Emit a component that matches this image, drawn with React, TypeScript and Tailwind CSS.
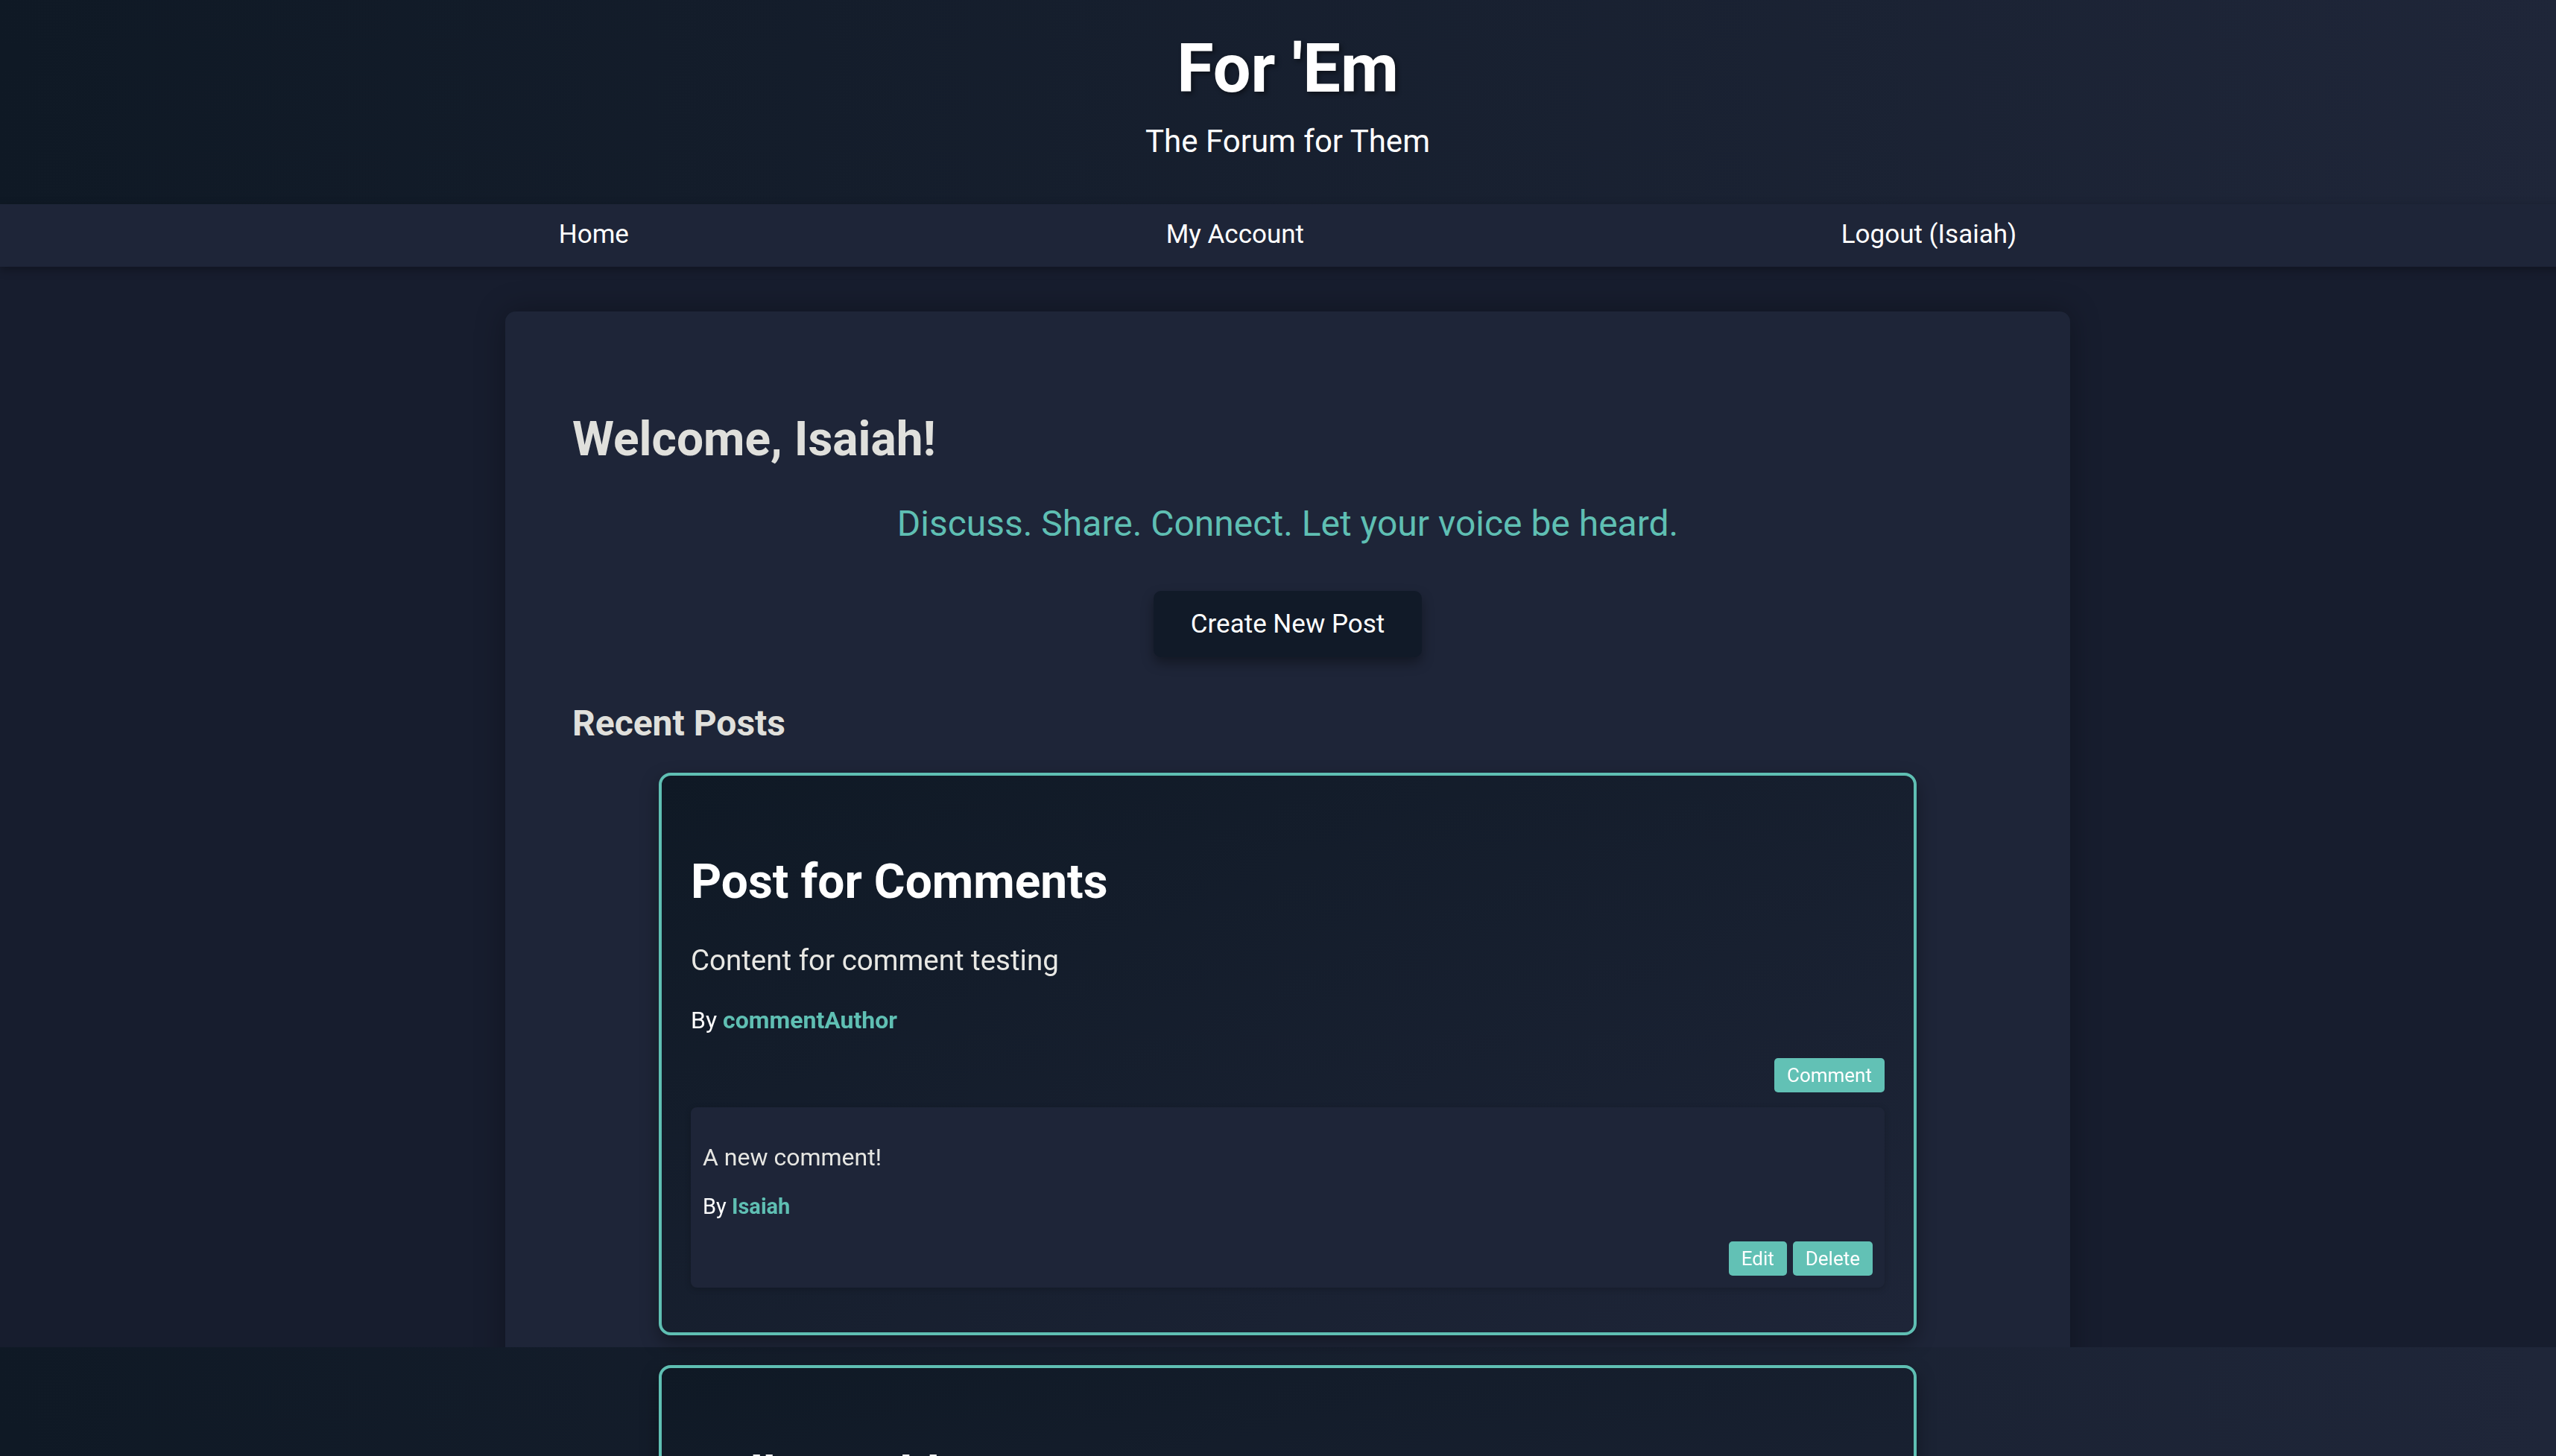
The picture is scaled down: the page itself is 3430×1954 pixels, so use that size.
import type { ReactNode } from "react";

type Comment = { id: number; body: string; author: string; mine: boolean };
type Post = { id: number; title: string; content: string; author: string; comments: Comment[] };

const posts: Post[] = [
  {
    id: 1,
    title: "Post for Comments",
    content: "Content for comment testing",
    author: "commentAuthor",
    comments: [{ id: 1, body: "A new comment!", author: "Isaiah", mine: true }],
  },
  {
    id: 2,
    title: "Hello World Post",
    content: "This post was edited after it was created",
    author: "Isaiah",
    comments: [],
  },
];

function SmallButton({ children }: { children: ReactNode }) {
  return (
    <button className="rounded-[5px] bg-[#62c1b5] px-[17px] py-[10px] text-[26px] leading-none text-white">
      {children}
    </button>
  );
}

function PostCard({ post }: { post: Post }) {
  return (
    <div className="rounded-[16px] border-4 border-[#5fbfb3] bg-linear-to-br from-[#0f1925] to-[#1e2538] px-[39px] pt-[111px] pb-[60px] shadow-[0_10px_24px_rgba(0,0,0,0.35)]">
      <h3 className="text-[64px] font-bold leading-none text-white">{post.title}</h3>
      <p className="mt-[54px] text-[38.5px] leading-none text-[#e8e8e4]">{post.content}</p>
      <p className="mt-[44px] text-[32px] leading-none text-white">
        By <span className="font-bold text-[#5fbfb3]">{post.author}</span>
      </p>
      <div className="mt-[35px] flex justify-end">
        <SmallButton>Comment</SmallButton>
      </div>

      {post.comments.map((c) => (
        <div
          key={c.id}
          className="mt-[20px] rounded-[8px] bg-[#1e2538] px-[16px] pt-[51px] pb-[16px] shadow-[0_2px_8px_rgba(0,0,0,0.2)]"
        >
          <p className="text-[32px] leading-none text-[#e6e6e2]">{c.body}</p>
          <p className="mt-[36px] text-[29px] leading-none text-white">
            By <span className="font-bold text-[#5fbfb3]">{c.author}</span>
          </p>
          {c.mine && (
            <div className="mt-[32px] flex justify-end gap-[8px]">
              <SmallButton>Edit</SmallButton>
              <SmallButton>Delete</SmallButton>
            </div>
          )}
        </div>
      ))}
    </div>
  );
}

export default function App() {
  const user = "Isaiah";

  return (
    <div className="overflow-hidden font-['Roboto','Liberation_Sans',sans-serif]">
      <div className="min-h-screen w-[3456px] bg-[#171d2e]">
        {/* Header */}
        <header className="bg-linear-to-r from-[#0f1925] to-[#1f2639] pt-[48px] pb-[63px] text-center text-white">
          <h1 className="text-[90px] font-bold leading-none [text-shadow:3px_3px_6px_rgba(0,0,0,0.45)]">
            For 'Em
          </h1>
          <p className="mt-[31px] text-[42px] leading-none">The Forum for Them</p>
        </header>

        {/* Nav */}
        <nav className="flex h-[84px] items-center justify-evenly bg-[#1e2538] px-[29px] pb-[4px] text-[35px] leading-none text-white shadow-[0_4px_12px_rgba(0,0,0,0.3)]">
          <a href="#">Home</a>
          <a href="#">My Account</a>
          <a href="#">Logout ({user})</a>
        </nav>

        <main className="pt-[60px] pb-[200px]">
          <section className="mx-auto w-[2100px] rounded-[14px] bg-[#1e2538] px-[90px] pt-[140px] pb-[120px] shadow-[0_0_40px_rgba(0,0,0,0.3)]">
            <h2 className="text-[64px] font-bold leading-none text-[#e0e0dc]">Welcome, {user}!</h2>
            <p className="mt-[57px] text-center text-[48px] leading-none text-[#5fbfb3]">
              Discuss. Share. Connect. Let your voice be heard.
            </p>
            <div className="mt-[66px] text-center">
              <button className="rounded-[10px] bg-[#111a28] px-[50px] py-[27px] text-[35px] leading-none text-white shadow-[0_8px_16px_rgba(0,0,0,0.35)]">
                Create New Post
              </button>
            </div>

            <h2 className="mt-[65px] text-[48px] font-bold leading-none text-[#e0e0dc]">Recent Posts</h2>

            {/* cards sit above the fixed footer */}
            <div className="relative z-10 mx-auto mt-[42px] flex w-[1688px] flex-col gap-[40px]">
              {posts.map((p) => (
                <PostCard key={p.id} post={p} />
              ))}
            </div>
          </section>
        </main>
      </div>

      <footer className="fixed inset-x-0 bottom-0 z-0 h-[146px] bg-linear-to-r from-[#0f1925] to-[#1f2639]" />
    </div>
  );
}
